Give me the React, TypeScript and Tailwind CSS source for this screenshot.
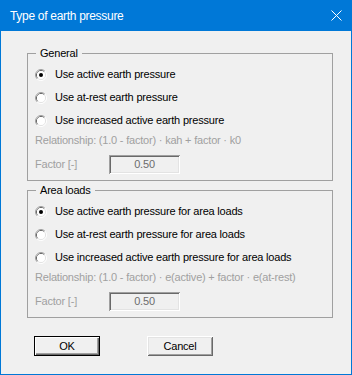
const font = "font-['Liberation_Sans',Arial,sans-serif]"

const Radio = ({ checked }: { checked?: boolean }) => (
  <svg width="12" height="12" viewBox="0 0 12 12" className="shrink-0">
    <path d="M2.11 9.89 A5.5 5.5 0 0 1 9.89 2.11" fill="none" stroke="#a0a0a0" />
    <path d="M9.89 2.11 A5.5 5.5 0 0 1 2.11 9.89" fill="none" stroke="#ffffff" />
    <path d="M2.82 9.18 A4.5 4.5 0 0 1 9.18 2.82" fill="none" stroke="#696969" />
    <path d="M9.18 2.82 A4.5 4.5 0 0 1 2.82 9.18" fill="none" stroke="#e3e3e3" />
    <circle cx="6" cy="6" r="4" fill="#ffffff" />
    {checked && <circle cx="6" cy="6" r="2" fill="#000000" />}
  </svg>
)

interface GroupProps {
  title: string
  options: string[]
  relationship: string
}

const Group = ({ title, options, relationship }: GroupProps) => (
  <div className="relative ml-[26px] w-[306px] h-[128px] border border-[#a0a0a0] pt-[9px] pl-[7px]">
    <span className="absolute left-[8px] -top-[8px] px-[4px] leading-[14px] bg-[#f0f0f0] text-black">
      {title}
    </span>
    {options.map((opt, i) => (
      <div key={opt} className="flex items-center h-[23px]">
        <Radio checked={i === 0} />
        <span className="ml-[8px] text-black">{opt}</span>
      </div>
    ))}
    <div className="flex items-center h-[17px] text-[#a0a0a0]">{relationship}</div>
    <div className="flex items-center mt-[6px] h-[19px]">
      <span className="w-[74px] text-[#a0a0a0]">Factor [-]</span>
      <div className="w-[71px] h-[19px] flex items-center justify-center bg-[#f0f0f0] text-[#6d6d6d] shadow-[inset_1px_1px_#a0a0a0,inset_-1px_-1px_#ffffff,inset_2px_2px_#696969,inset_-2px_-2px_#e3e3e3]">
        0.50
      </div>
    </div>
  </div>
)

export default function App() {
  return (
    <div className={`w-[352px] h-[375px] bg-[#f0f0f0] border-x border-b border-[#0078d7] text-[11px] tracking-[-0.2px] ${font}`}>
      <div className="h-[31px] bg-[#0078d7] flex items-center justify-between pl-[9px] pr-[9px]">
        <span className="text-white text-[12px] tracking-[-0.3px]">Type of earth pressure</span>
        <svg width="11" height="11" viewBox="0 0 11 11">
          <path d="M0.5 0.5 L10.5 10.5 M10.5 0.5 L0.5 10.5" stroke="#ffffff" strokeWidth="1" />
        </svg>
      </div>

      <div className="mt-[22px]">
        <Group
          title="General"
          options={[
            "Use active earth pressure",
            "Use at-rest earth pressure",
            "Use increased active earth pressure",
          ]}
          relationship="Relationship: (1.0 - factor) · kah + factor · k0"
        />
      </div>

      <div className="mt-[9px]">
        <Group
          title="Area loads"
          options={[
            "Use active earth pressure for area loads",
            "Use at-rest earth pressure for area loads",
            "Use increased active earth pressure for area loads",
          ]}
          relationship="Relationship: (1.0 - factor) · e(active) + factor · e(at-rest)"
        />
      </div>

      <div className="flex mt-[18px] ml-[33px] gap-[47px]">
        <button className="w-[66px] h-[20px] border border-black bg-[#f0f0f0] text-black shadow-[inset_1px_1px_#ffffff,inset_-1px_-1px_#696969,inset_-2px_-2px_#a0a0a0]">
          OK
        </button>
        <button className="w-[66px] h-[20px] bg-[#f0f0f0] text-black shadow-[inset_1px_1px_#ffffff,inset_-1px_-1px_#696969,inset_2px_2px_#e3e3e3,inset_-2px_-2px_#a0a0a0]">
          Cancel
        </button>
      </div>
    </div>
  )
}
